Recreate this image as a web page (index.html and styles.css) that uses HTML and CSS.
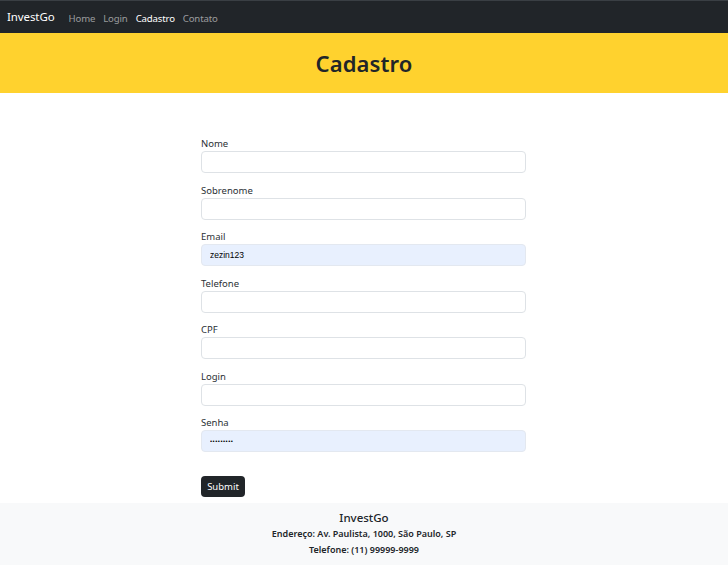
FILE: index.html
```html
<!DOCTYPE html>
<html lang="pt-BR">
<head>
<meta charset="utf-8">
<title>Cadastro - InvestGo</title>
<link rel="stylesheet" href="styles.css">
</head>
<body>
<nav class="navbar">
  <a class="brand" href="#">InvestGo</a>
  <ul class="nav-links">
    <li><a href="#">Home</a></li>
    <li><a href="#">Login</a></li>
    <li><a class="active" href="#">Cadastro</a></li>
    <li><a href="#">Contato</a></li>
  </ul>
</nav>
<header class="hero">
  <h1>Cadastro</h1>
</header>
<main class="content">
  <form class="form">
    <div class="group"><label>Nome</label><input class="control" type="text"></div>
    <div class="group"><label>Sobrenome</label><input class="control" type="text"></div>
    <div class="group"><label>Email</label><input class="control filled" type="text" value="zezin123"></div>
    <div class="group"><label>Telefone</label><input class="control" type="text"></div>
    <div class="group"><label>CPF</label><input class="control" type="text"></div>
    <div class="group"><label>Login</label><input class="control" type="text"></div>
    <div class="group"><label>Senha</label><input class="control filled pw" type="password" value="123456789"></div>
    <button class="submit" type="button">Submit</button>
  </form>
</main>
<footer class="footer">
  <div class="f-brand">InvestGo</div>
  <div class="f-line">Endereço: Av. Paulista, 1000, São Paulo, SP</div>
  <div class="f-line">Telefone: (11) 99999-9999</div>
</footer>
</body>
</html>
```
FILE: styles.css
```css
* { box-sizing: border-box; }
html, body { margin: 0; padding: 0; }
body {
  font-family: "Noto Sans", "Open Sans", sans-serif;
  color: #212529;
  background: #fff;
  width: 728px;
  height: 565px;
  overflow: hidden;
}
.navbar {
  height: 33px;
  background: #212529;
  border-top: 1px solid #3a3f44;
  display: flex;
  align-items: center;
  padding: 0 7px 2px;
}
.brand {
  color: #fff;
  text-decoration: none;
  font-size: 11.5px;
  margin-right: 14px;
  letter-spacing: -0.1px;
}
.nav-links {
  list-style: none;
  display: flex;
  margin: 0;
  padding: 0;
}
.nav-links a {
  color: rgba(255,255,255,0.55);
  text-decoration: none;
  font-size: 9.6px;
  padding: 0 4px;
  letter-spacing: -0.15px;
}
.nav-links li:first-child a { padding-left: 0; }
.nav-links a.active { color: #fff; }
.hero {
  height: 60px;
  background: #ffd22e;
  display: flex;
  align-items: center;
  justify-content: center;
}
.hero h1 {
  margin: 0;
  font-size: 22px;
  font-weight: 600;
  letter-spacing: 0.1px;
}
.content {
  height: 410px;
  padding-top: 44px;
}
.form {
  width: 325px;
  margin-left: 201px;
}
.group {
  display: flex;
  flex-direction: column;
  margin-bottom: 10.5px;
}
.group label {
  font-size: 9.5px;
  color: #2b3035;
  line-height: 13px;
  height: 13px;
  margin-bottom: 1px;
}
.control {
  height: 22px;
  width: 100%;
  border: 1px solid #dee2e6;
  border-radius: 4px;
  background: #fff;
  padding: 0 8px;
  font-family: "Liberation Sans", Arial, sans-serif;
  font-size: 8.5px;
  color: #000;
  outline: none;
}
.control.filled { background: #e8f0fe; border-color: #e3e8f0; }
.control.pw { font-size: 6px; letter-spacing: 0.5px; }
.submit {
  margin-top: 13.5px;
  height: 21px;
  width: 44px;
  padding: 0;
  border: none;
  border-radius: 4px;
  background: #212529;
  color: #fff;
  font-family: "Noto Sans", "Open Sans", sans-serif;
  font-size: 9.5px;
}
.footer {
  height: 62px;
  background: #f8f9fa;
  display: flex;
  flex-direction: column;
  align-items: center;
  padding-top: 6px;
}
.f-brand {
  font-size: 11.5px;
  font-weight: 500;
  line-height: 17px;
}
.f-line {
  font-size: 9px;
  font-weight: 600;
  line-height: 16px;
}
```
